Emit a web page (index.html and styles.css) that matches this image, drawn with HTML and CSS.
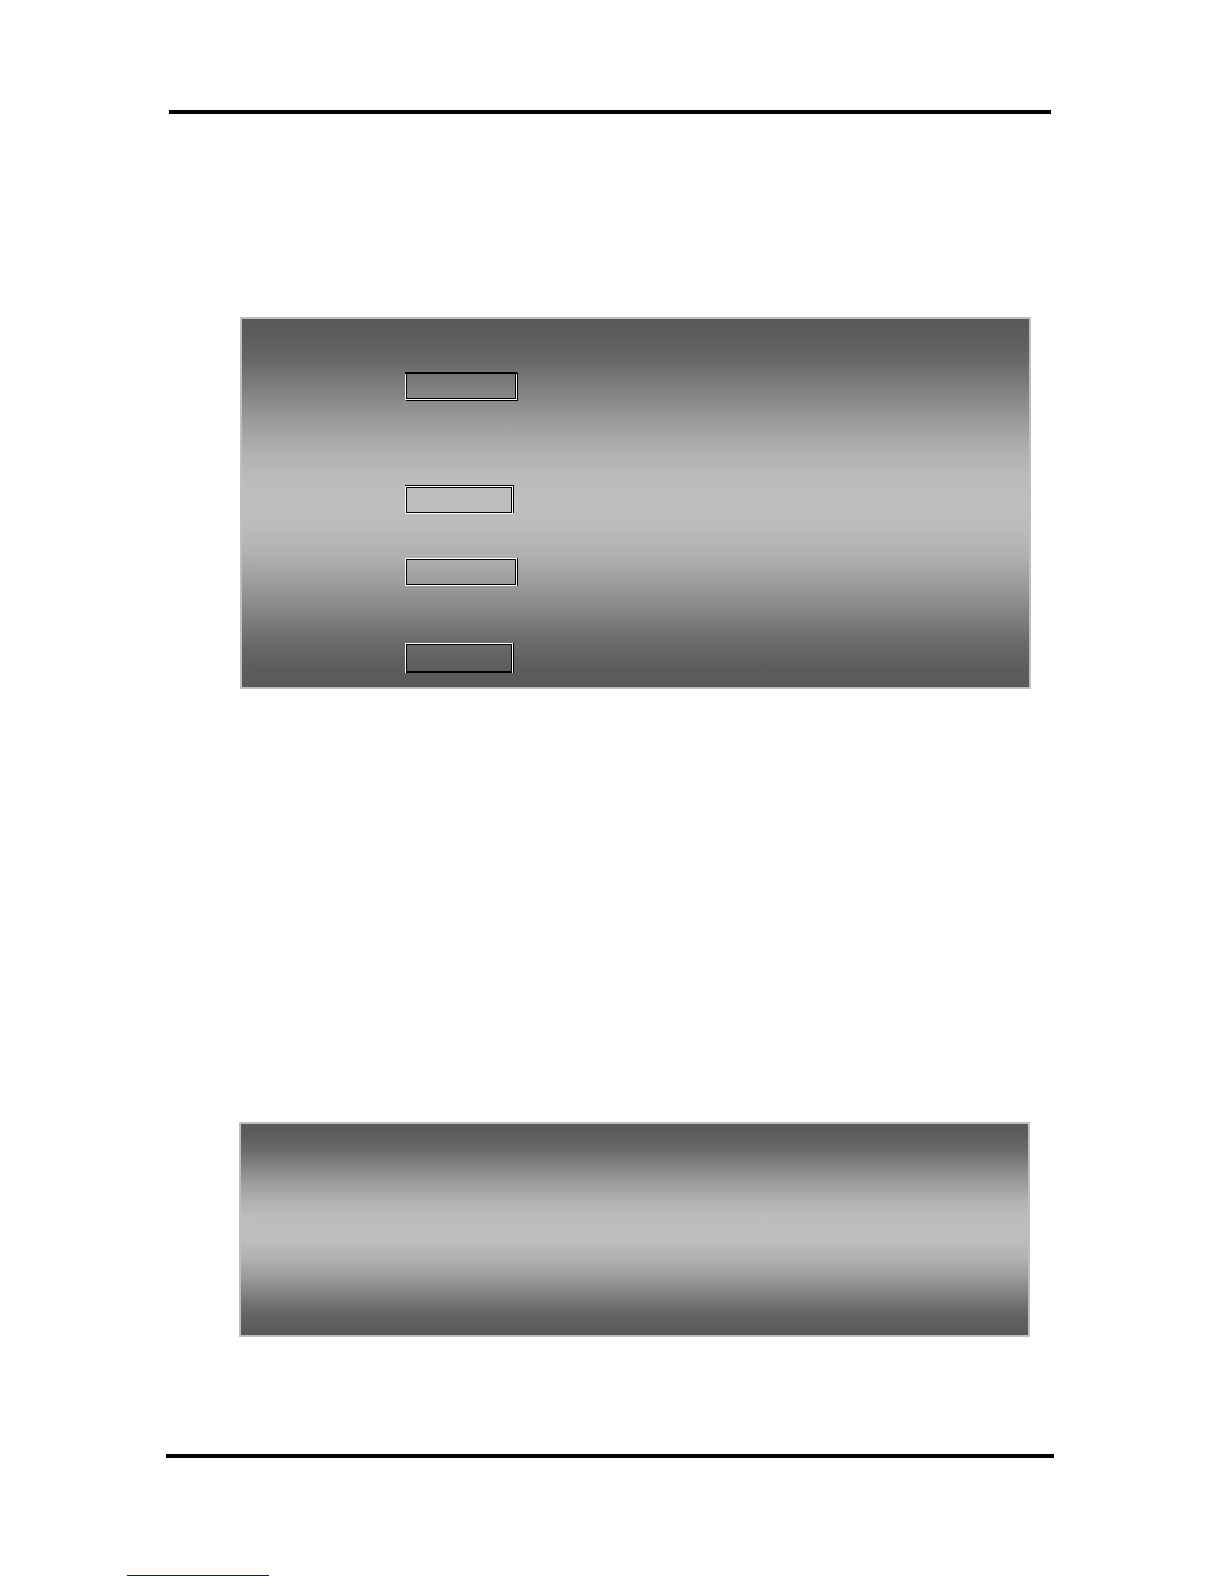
FILE: index.html
```html
<!DOCTYPE html>
<html lang="en">
<head>
<meta charset="utf-8">
<title>Document page</title>
<link rel="stylesheet" href="styles.css">
</head>
<body>
<div class="page">
  <header class="rule rule-top"></header>
  <main class="content">
    <section class="panel panel-main">
      <div class="frame frame-wide frame-first"></div>
      <div class="frame frame-second"></div>
      <div class="frame frame-wide frame-third"></div>
      <div class="frame frame-last"></div>
    </section>
    <section class="panel panel-small"></section>
  </main>
  <footer>
    <div class="rule rule-bottom"></div>
    <div class="footer-line"></div>
  </footer>
</div>
</body>
</html>
```
FILE: styles.css
```css
* {
  box-sizing: border-box;
}

body {
  margin: 0;
  background: #fff;
  font-family: "Liberation Sans", Arial, sans-serif;
}

.page {
  display: flex;
  flex-direction: column;
  min-height: 100vh;
  padding: 110px 0 8px;
}

.rule {
  height: 4px;
  background: #000;
}

.rule-top {
  margin: 0 173px 0 169px;
}

.rule-bottom {
  margin: 0 170px 0 166px;
}

.content {
  display: flex;
  flex-direction: column;
  gap: 433px;
  padding: 203px 0 117px;
}

.panel {
  border: 2px solid #bfbfbf;
  background: linear-gradient(#595959 0%, #5d5d5d 5%, #6a6a6a 12%, #838383 20%, #9c9c9c 28%, #b0b0b0 36%, #bbbbbb 43%, #bfbfbf 50%, #bbbbbb 57%, #b0b0b0 64%, #9c9c9c 72%, #838383 80%, #6a6a6a 88%, #5d5d5d 95%, #595959 100%);
}

.panel-main {
  margin: 0 193px 0 240px;
  padding: 54px 164px 15px;
}

.panel-small {
  margin: 0 194px 0 239px;
  padding: 105px 0 106px;
}

/* Thin black frames with a white bevel and a black edge outside it */
.frame {
  width: 106px;
  height: 26px;
  border: 1px solid #000;
}

.frame-wide {
  width: 110px;
}

.frame-first {
  margin-bottom: 88px;
  box-shadow: 0 -1px #000, -1px 1px #fff, 1px 1px #fff, 1px -1px #000, -1px -1px #000, 1px 1px 0 1px #000;
}

.frame-second {
  margin-bottom: 46px;
  box-shadow: 0 0 0 1px #fff, 1px -1px 0 1px #000, 0 -1px 0 1px #000;
}

.frame-third {
  margin-bottom: 59px;
  box-shadow: 0 0 0 1px #fff, 1px 0 0 1px #000;
}

.frame-last {
  height: 28px;
  box-shadow: 0 1px #000, 0 0 0 1px #fff, 1px 0 0 1px #000;
}

.footer-line {
  width: 142px;
  height: 1px;
  margin: 117px 0 0 127px;
  background: #10108c;
}
```
